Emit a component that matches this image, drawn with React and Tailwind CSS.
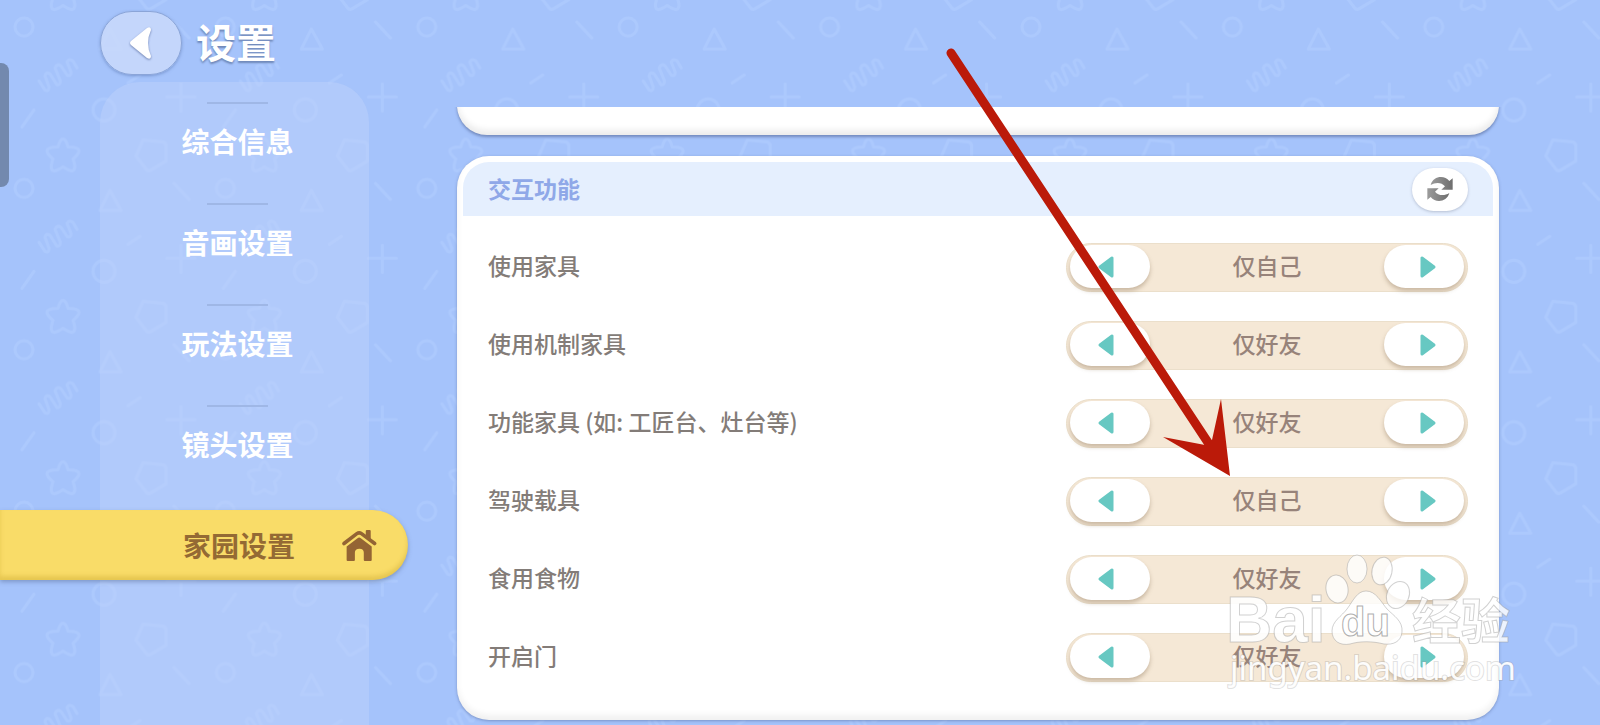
import React, { useState } from 'react';

const tabs = ['综合信息', '音画设置', '玩法设置', '镜头设置', '家园设置'];

const options = ['仅自己', '仅好友'];

const initialRows = [
    { label: '使用家具', value: 0 },
    { label: '使用机制家具', value: 1 },
    { label: '功能家具 (如: 工匠台、灶台等)', value: 1 },
    { label: '驾驶载具', value: 0 },
    { label: '食用食物', value: 1 },
    { label: '开启门', value: 1 },
];

// Star and pentagon cross the tile edge, so they are drawn twice
const EdgeShapes = () => (
    <>
        <path d="M63 139 Q66 139 68 147 Q79 147 79 151 Q79 154 73 159 Q77 170 72 171 Q69 171 63 167 Q57 171 54 171 Q49 170 53 159 Q47 154 47 151 Q47 147 58 147 Q60 139 63 139Z" />
        <path d="M143 140 L163 142 Q166 143 166 146 L166 161 L151 170 Q148 172 146 169 L136 156 Z" />
    </>
);

const BackgroundPattern = () => (
    <svg className="absolute inset-0 w-full h-full" aria-hidden="true">
        <defs>
            <pattern id="shapes" width="201.4" height="161.4" patternUnits="userSpaceOnUse">
                <g fill="none" stroke="#aecafd" strokeOpacity="0.75" strokeWidth="3" strokeLinecap="round" strokeLinejoin="round">
                    <circle cx="24" cy="27" r="9" />
                    <circle cx="104" cy="110" r="11" />
                    <path d="M110 29 L121 49 L100 49 Z" />
                    <path d="M174 22 L189 38" />
                    <path d="M22 127 L34 110" />
                    <path d="M128 83 L140 75" />
                    <path d="M167 97 H195 M181 84 V111" />
                    <path d="M39 81 L45 90 Q49 92 49 87 L45 76 Q46 71 50 74 L57 85 Q61 85 60 80 L55 68 Q57 63 61 66 L67 75 Q71 77 71 72 L67 62 Q69 58 73 61 L77 68" />
                    <EdgeShapes />
                    <g transform="translate(0 -161.4)">
                        <EdgeShapes />
                    </g>
                </g>
            </pattern>
        </defs>
        <rect width="100%" height="100%" fill="url(#shapes)" />
    </svg>
);

const HomeIcon = () => (
    <svg viewBox="1020 143 112 100" className="w-[37px] h-[33px]" fill="#946434" aria-hidden="true">
        <path d="M1029 187 L1068 157 Q1075 152 1082 157 L1122 187" fill="none" stroke="#946434" strokeWidth="11" strokeLinecap="round" />
        <path d="M1095 149 Q1095 146 1098 146 H1107 Q1110 146 1110 149 V174 L1095 163Z" />
        <path d="M1037 196 L1070 171 Q1075 167 1080 171 L1113 196 V237 Q1113 240 1110 240 H1092 Q1089 240 1089 237 V215 Q1089 203 1076 203 Q1062 203 1062 215 V237 Q1062 240 1059 240 H1040 Q1037 240 1037 237Z" />
    </svg>
);

const RefreshIcon = () => (
    <svg viewBox="0 0 78 72" className="w-[26px] h-6" aria-hidden="true">
        <defs>
            <linearGradient id="grey" x1="0" x2="1">
                <stop offset="0" stopColor="#9b9b9b" />
                <stop offset="1" stopColor="#6e6e6e" />
            </linearGradient>
        </defs>
        <g fill="url(#grey)">
            <path d="M11 24 C18 -3 52 -7 67 12 L77 4 V38 H43 L54 28 C44 15 25 15 11 24Z" />
            <path d="M67 48 C60 75 26 79 11 60 L1 68 V34 H35 L24 44 C34 57 53 57 67 48Z" />
        </g>
    </svg>
);

const StepButton = ({ direction, label, onClick }) => (
    <button
        type="button"
        aria-label={label}
        onClick={onClick}
        className={
            'w-20 h-[43px] flex items-center justify-center rounded-full bg-white shadow-[0_3px_4px_rgba(120,95,65,0.35)] cursor-pointer ' +
            (direction === 'left' ? 'pr-2' : 'pl-2')
        }
    >
        <svg viewBox="0 0 18 24" className="w-[18px] h-6" fill="#67c8c2" stroke="#67c8c2" strokeWidth="3" strokeLinejoin="round" aria-hidden="true">
            {direction === 'left' ? <path d="M15 3 V21 L3 12Z" /> : <path d="M3 3 V21 L15 12Z" />}
        </svg>
    </button>
);

const SettingRow = ({ row, onStep }) => (
    <li className="flex items-center justify-between h-[49px]">
        <span className="pb-1 text-[23px] font-medium text-[#837c78]">{row.label}</span>
        <div
            role="group"
            aria-label={row.label}
            className="w-[402px] h-[49px] px-[3px] pb-0.5 flex items-center justify-between rounded-full bg-[#f5e8d6] border border-[#ebdfcb]"
        >
            <StepButton direction="left" label="上一个" onClick={onStep} />
            <span className="pb-0.5 text-[23px] font-medium text-[#97837a]">{options[row.value]}</span>
            <StepButton direction="right" label="下一个" onClick={onStep} />
        </div>
    </li>
);

const Watermark = () => (
    <svg
        viewBox="1220 545 300 155"
        className="absolute top-[545px] right-20 w-[300px] h-[155px] pointer-events-none"
        fill="#ffffff"
        fillOpacity="0.8"
        stroke="#9a9a9a"
        strokeOpacity="0.45"
        aria-hidden="true"
    >
        <ellipse cx="1357" cy="569" rx="10" ry="14" />
        <ellipse cx="1382" cy="571" rx="10" ry="14" transform="rotate(12 1382 571)" />
        <ellipse cx="1337" cy="589" rx="11" ry="14" transform="rotate(-10 1337 589)" />
        <ellipse cx="1398" cy="595" rx="11" ry="14" transform="rotate(25 1398 595)" />
        <path d="M1366 591 C1376 591 1381 602 1387 609 C1394 616 1403 621 1402 632 C1401 642 1393 645 1384 644 C1372 641 1360 641 1350 644 C1340 646 1332 641 1332 631 C1332 621 1342 616 1347 609 C1353 601 1357 591 1366 591Z" />
        <g fontWeight="700">
            <text x="1226" y="642" fontSize="64" fontFamily="'Liberation Sans', sans-serif" fillOpacity="0.9">Bai</text>
            <text x="1341" y="636" fontSize="40" fontFamily="'Liberation Sans', sans-serif" strokeOpacity="0.8">du</text>
            <text x="1412" y="639" fontSize="49" fontFamily="'Noto Sans CJK SC', sans-serif">经验</text>
        </g>
        <text x="1230" y="680" fontSize="33" fontFamily="'Noto Sans', sans-serif" fillOpacity="0.95" style={{ paintOrder: 'stroke' }} strokeWidth="2" strokeOpacity="0.3">
            jingyan.baidu.com
        </text>
    </svg>
);

// Red pointer towards the vehicle setting
const Pointer = () => (
    <svg viewBox="940 40 300 440" className="absolute top-10 right-[360px] w-[300px] h-[440px] pointer-events-none" fill="#bb1a09" aria-hidden="true">
        <path d="M951 53 L1209 444" fill="none" stroke="#bb1a09" strokeWidth="9" strokeLinecap="round" />
        <path d="M1163 437 L1205 445 L1212 440 L1221 399 L1230 476Z" />
    </svg>
);

const App = () => {
    const [active, setActive] = useState(4);
    const [rows, setRows] = useState(initialRows);

    const step = (index) => {
        setRows(rows.map((row, i) => (i === index ? { ...row, value: (row.value + 1) % options.length } : row)));
    };

    return (
        <div className="relative min-h-screen overflow-hidden bg-[#a5c3fb] font-['Noto_Sans_CJK_SC',sans-serif]">
            <BackgroundPattern />
            <div className="absolute left-0 top-[63px] w-[9px] h-[124px] rounded-r-lg bg-[#7389ae]" />

            <div className="relative flex min-h-screen">
                <div className="w-[408px] shrink-0 flex flex-col">
                    <header className="h-[82px] pt-[11px] pl-[100px] flex items-start gap-[14px]">
                        <button
                            type="button"
                            aria-label="返回"
                            className="w-[82px] h-16 flex items-center justify-center rounded-full bg-[#c8d8fb]/90 border border-[#8ba5d8] shadow-[0_1px_3px_rgba(80,110,170,0.5)] cursor-pointer"
                        >
                            <svg viewBox="0 0 24 34" className="w-6 h-[34px] drop-shadow-[0_1px_1px_rgba(90,110,160,0.8)]" fill="#fff" aria-hidden="true">
                                <path d="M18 2 Q22 0 22 4 Q16 17 22 30 Q22 34 18 32 L2 19 Q0 17 2 15Z" />
                            </svg>
                        </button>
                        <h1 className="text-[40px] leading-[60px] font-bold text-white [text-shadow:0_2px_2px_#6f88b8]">设置</h1>
                    </header>

                    <nav className="flex-1 ml-[100px] mr-[39px] pt-5 rounded-t-[40px] bg-[#bed1fc]/50">
                        <ul>
                            {tabs.map((tab, index) => (
                                <li key={tab} className="h-[101px] flex flex-col items-center gap-0.5">
                                    <div className={index === active ? 'h-0.5' : 'h-0.5 w-[61px] ml-1.5 bg-[#9fb7e6]'} />
                                    {index === active ? (
                                        <button
                                            type="button"
                                            aria-current="page"
                                            className="w-[408px] h-[70px] -ml-[61px] pl-[183px] flex items-center gap-[46px] shrink-0 rounded-r-full bg-[#f9dc68] text-[#946a34] text-[28px] font-bold shadow-[0_2px_4px_rgba(90,110,150,0.5),inset_0_-4px_4px_rgba(190,150,30,0.3)] cursor-pointer"
                                        >
                                            {tab}
                                            <HomeIcon />
                                        </button>
                                    ) : (
                                        <button
                                            type="button"
                                            onClick={() => setActive(index)}
                                            className="w-full h-[70px] pl-1.5 text-[28px] font-bold text-white cursor-pointer"
                                        >
                                            {tab}
                                        </button>
                                    )}
                                </li>
                            ))}
                        </ul>
                    </nav>
                </div>

                <main className="flex-1 flex flex-col pt-[107px] pb-[5px]">
                    <div className="flex flex-col gap-[21px] overflow-hidden pl-[49px] pr-[101px] pb-1">
                        {/* Bottom edge of the previous group, scrolled out of view */}
                        <section className="-mt-8 h-[60px] shrink-0 rounded-[36px] bg-white shadow-[0_2px_3px_rgba(80,100,150,0.6),inset_0_-5px_6px_rgba(0,0,0,0.08)]" />

                        <section className="rounded-[32px] bg-white p-1.5 pb-[38px] shadow-[0_1px_3px_rgba(80,100,150,0.5),inset_0_-5px_6px_rgba(0,0,0,0.06)]">
                            <div className="h-[54px] px-[25px] flex items-center justify-between rounded-t-[26px] bg-[#e5effe]">
                                <h2 className="pb-0.5 text-[23px] font-bold text-[#8fa8e8]">交互功能</h2>
                                <button
                                    type="button"
                                    aria-label="重置"
                                    onClick={() => setRows(initialRows)}
                                    className="w-14 h-[43px] flex items-center justify-center rounded-full bg-white shadow-[0_1px_3px_rgba(90,100,130,0.35)] cursor-pointer"
                                >
                                    <RefreshIcon />
                                </button>
                            </div>
                            <ul className="flex flex-col gap-[29px] pt-[27px] px-[25px]">
                                {rows.map((row, index) => (
                                    <SettingRow key={row.label} row={row} onStep={() => step(index)} />
                                ))}
                            </ul>
                        </section>
                    </div>
                </main>
            </div>

            <Watermark />
            <Pointer />
        </div>
    );
};

export default App;
